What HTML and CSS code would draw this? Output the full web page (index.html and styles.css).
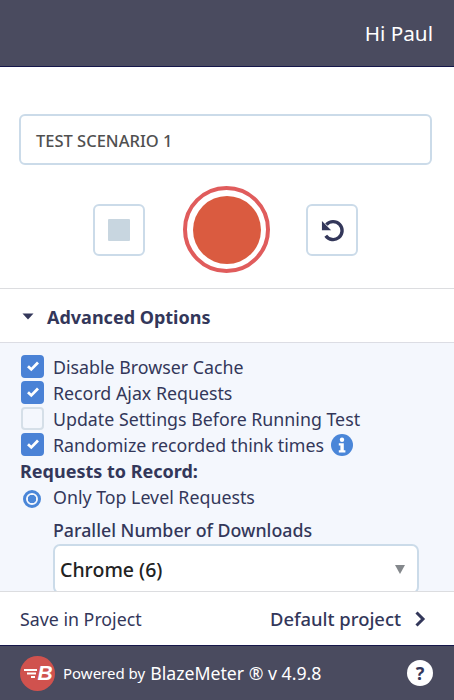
FILE: index.html
```html
<!DOCTYPE html>
<html lang="en">
<head>
<meta charset="utf-8">
<title>BlazeMeter Recorder</title>
<link rel="stylesheet" href="styles.css">
</head>
<body>
<div class="app">
  <header class="top"><span>Hi Paul</span></header>
  <section class="main">
    <div class="name">TEST SCENARIO 1</div>
    <div class="controls">
      <button class="square" aria-label="Stop"><span class="stop"></span></button>
      <button class="record" aria-label="Record"><span class="dot"></span></button>
      <button class="square" aria-label="Reset">
        <svg width="27" height="27" viewBox="0 0 24 24" fill="none">
          <path d="M6.6 7.600A8 8 0 1 1 6 17.600" stroke="#33375a" stroke-width="3" stroke-linecap="butt"/>
          <path d="M2.600 4.400v8.200h8.200z" fill="#33375a"/>
        </svg>
      </button>
    </div>
  </section>
  <div class="adv-head">
    <svg class="caret" width="12" height="7" viewBox="0 0 12 7"><path d="M0.5 0.5h11L6 6.500z" fill="#33375a"/></svg>
    <span>Advanced Options</span>
  </div>
  <section class="panel">
    <div class="opt"><span class="cb on"><svg width="14" height="12" viewBox="0 0 14 12"><path d="M2 6.200l3.300 3.200L12 2.600" fill="none" stroke="#fff" stroke-width="2.800"/></svg></span>Disable Browser Cache</div>
    <div class="opt"><span class="cb on"><svg width="14" height="12" viewBox="0 0 14 12"><path d="M2 6.200l3.300 3.200L12 2.600" fill="none" stroke="#fff" stroke-width="2.800"/></svg></span>Record Ajax Requests</div>
    <div class="opt"><span class="cb"></span>Update Settings Before Running Test</div>
    <div class="opt"><span class="cb on"><svg width="14" height="12" viewBox="0 0 14 12"><path d="M2 6.200l3.300 3.200L12 2.600" fill="none" stroke="#fff" stroke-width="2.800"/></svg></span>Randomize recorded think times
      <svg class="info" width="22" height="22" viewBox="0 0 22 22"><circle cx="11" cy="11" r="11" fill="#4a86d8"/><circle cx="11" cy="5.800" r="2.200" fill="#fff"/><path d="M7.800 9.200h5v7h1.600v2.200H7.800v-2.200h1.600v-4.800H7.800z" fill="#fff"/></svg>
    </div>
    <div class="req-title">Requests to Record:</div>
    <div class="opt radio-row"><span class="radio"></span>Only Top Level Requests</div>
    <div class="sub">
      <div class="par-title">Parallel Number of Downloads</div>
      <div class="select"><span>Chrome (6)</span><i class="tri"></i></div>
    </div>
  </section>
  <div class="project">
    <span>Save in Project</span>
    <span class="proj-val">Default project
      <svg width="12" height="16" viewBox="0 0 12 16"><path d="M2.500 1.500L9 8l-6.500 6.500" fill="none" stroke="#33375a" stroke-width="3"/></svg>
    </span>
  </div>
  <footer class="foot">
    <svg class="logo" width="35" height="35" viewBox="0 0 35 35">
      <circle cx="17.500" cy="17.500" r="17.500" fill="#d0524e"/>
      <path d="M4 14h13M7 17.500h9M11 21h4" stroke="#fff" stroke-width="1.800"/>
      <text x="17.500" y="24" class="logo-b">B</text>
    </svg>
    <span class="powered">Powered by</span><span class="brand">BlazeMeter ® v 4.9.8</span>
    <span class="help">?</span>
  </footer>
</div>
</body>
</html>
```
FILE: styles.css
```css
* { box-sizing: border-box; }
html, body { margin: 0; padding: 0; }
body { font-family: "Noto Sans", "Open Sans", sans-serif; color: #33375a; background: #fff; }
.app { width: 454px; height: 700px; display: flex; flex-direction: column; overflow: hidden; }
.top { height: 67px; flex: none; background: #4a4b5f; border-bottom: 1px solid #15174a; color: #fff; font-size: 20.700px; display: flex; justify-content: flex-end; align-items: center; padding: 0 21px 0 0; }
.main { height: 222px; flex: none; padding: 47px 22px 0 19px; border-bottom: 1px solid #dcdde0; }
.name { height: 51px; border: 2px solid #cbdbe9; border-radius: 6px; padding: 1px 15px 0; display: flex; align-items: center; font-size: 16.500px; font-weight: 500; color: #505050; }
.controls { display: flex; align-items: center; margin-top: 21px; padding-left: 74px; }
button { padding: 0; background: #fff; cursor: pointer; }
.square { width: 52px; height: 52px; border: 2px solid #cbdbe9; border-radius: 6px; display: flex; align-items: center; justify-content: center; }
.stop { width: 22px; height: 22px; background: #c8d6e0; border-radius: 1px; }
.record { width: 87px; height: 87px; margin: 0 36px 0 38px; border: 4px solid #e05c5c; border-radius: 50%; display: flex; align-items: center; justify-content: center; }
.dot { width: 68px; height: 68px; background: #da5b40; border-radius: 50%; }
.adv-head { height: 54px; flex: none; display: flex; align-items: center; padding: 2px 0 0 22px; border-bottom: 1px solid #dcdde4; font-size: 18px; font-weight: 700; }
.caret { margin-right: 13px; }
.panel { height: 248px; flex: none; overflow: hidden; background: #f4f7fd; padding: 11px 0 0 20px; font-size: 17.800px; }
.opt { height: 26px; display: flex; align-items: center; white-space: nowrap; }
.cb { width: 23px; height: 23px; flex: none; margin: -2px 9px 0 1px; border-radius: 4px; border: 2px solid #d5dfe8; background: #f4f7fd; display: flex; align-items: center; justify-content: center; }
.cb.on { background: #4a82d6; border-color: #4a82d6; }
.info { margin-left: 7px; }
.req-title { height: 26px; font-size: 18px; font-weight: 700; line-height: 27px; }
.radio-row { height: 26px; }
.radio { width: 18px; height: 18px; flex: none; margin: 3px 12px 0 3px; border-radius: 50%; border: 3px solid #4a86d8; background: radial-gradient(circle, #4a86d8 0 4px, #f4f7fd 4.500px); }
.sub { padding-left: 33px; margin-top: 7px; }
.par-title { height: 26px; line-height: 26px; font-weight: 500; }
.select { width: 366px; height: 50px; margin-top: 1px; background: #fff; border: 2px solid #cbdbe9; border-radius: 7px; display: flex; align-items: center; justify-content: space-between; padding: 0 12px 0 5px; font-size: 19.500px; font-weight: 500; color: #222; }
.tri { width: 0; height: 0; border-left: 5px solid transparent; border-right: 5px solid transparent; border-top: 9px solid #84888c; }
.project { height: 55px; flex: none; border-top: 1px solid #dcdde0; border-bottom: 1px solid #15174a; display: flex; align-items: center; justify-content: space-between; padding: 0 28px 0 20px; font-size: 17.800px; }
.proj-val { display: flex; align-items: center; gap: 13px; font-size: 18.400px; font-weight: 500; }
.foot { height: 54px; flex: none; background: #4a4b5f; color: #fff; display: flex; align-items: center; padding: 0 21px 0 20px; font-size: 15px; }
.logo { flex: none; margin-right: 8px; }
.logo-b { font: italic 700 21px "Liberation Sans", sans-serif; fill: #fff; }
.powered { margin-right: 5px; }
.brand { font-size: 17.700px; }
.help { margin-left: auto; width: 26px; height: 26px; border-radius: 50%; background: #fff; color: #33375a; font-weight: 700; font-size: 18px; display: flex; align-items: center; justify-content: center; }
```
